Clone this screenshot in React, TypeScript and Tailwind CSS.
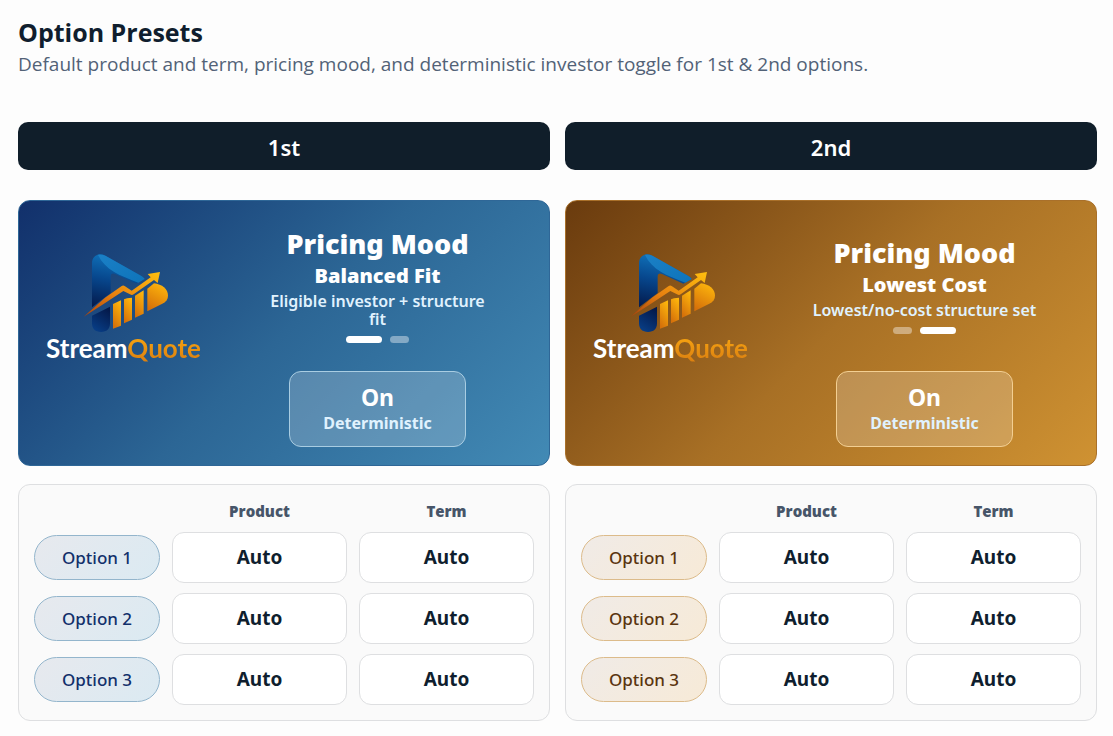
import { useId, useState } from 'react'
import clsx from 'clsx'

type Tone = 'blue' | 'amber'

interface Mood {
  name: string
  detail: string
}

const moods: Mood[] = [
  { name: 'Balanced Fit', detail: 'Eligible investor + structure fit' },
  { name: 'Lowest Cost', detail: 'Lowest/no-cost structure set' },
]

const products = ['Auto', 'Conventional', 'FHA', 'VA']
const terms = ['Auto', '30 yr', '20 yr', '15 yr']

const heroTones = {
  blue: 'border-[#2f6797] bg-linear-135 from-[#12306b] via-[#2c6695] to-[#428ab5]',
  amber: 'border-[#a9702a] bg-linear-135 from-[#6a3b0e] via-[#a87025] to-[#cf9232]',
}

const toggleTones = {
  blue: 'border-[#a9cde2]',
  amber: 'border-[#f3cf92]',
}

const pillTones = {
  blue: 'border-[#93b5cc] bg-linear-135 from-[#e7e9ee] to-[#dbeaf2] text-[#12306b]',
  amber: 'border-[#dcbb8a] bg-linear-135 from-[#f0ebe7] to-[#f7ead7] text-[#5a3510]',
}

function Logo() {
  const id = useId()
  const blue = `${id}-blue`
  const sky = `${id}-sky`
  const stem = `${id}-stem`
  const gold = `${id}-gold`
  const arrow = `${id}-arrow`

  return (
    <div className="flex flex-col items-center">
      <svg viewBox="-6 15 273 240" className="h-20 w-[91px]" aria-hidden="true">
        <defs>
          <linearGradient id={blue} x1="0.2" y1="0" x2="0" y2="1">
            <stop offset="0" stopColor="#0f70b8" />
            <stop offset="0.45" stopColor="#07468c" />
            <stop offset="1" stopColor="#04194a" />
          </linearGradient>
          <linearGradient id={sky} x1="0" y1="0" x2="1" y2="1">
            <stop offset="0" stopColor="#1b80c6" />
            <stop offset="1" stopColor="#0e74ba" />
          </linearGradient>
          <linearGradient id={stem} x1="0.7" y1="0" x2="0.2" y2="1">
            <stop offset="0" stopColor="#04194a" />
            <stop offset="1" stopColor="#083f88" />
          </linearGradient>
          <linearGradient id={gold} x1="0.7" y1="0" x2="0.3" y2="1">
            <stop offset="0" stopColor="#fdb50c" />
            <stop offset="1" stopColor="#d5700a" />
          </linearGradient>
          <linearGradient id={arrow} x1="0" y1="1" x2="1" y2="0">
            <stop offset="0" stopColor="#a8400c" />
            <stop offset="0.45" stopColor="#e88210" />
            <stop offset="1" stopColor="#ffc00e" />
          </linearGradient>
        </defs>
        <path
          d="M36 178V46C36 24 56 12 76 23L184 84c5 3 8 6 10 9l-25 14-64-29c-8-4-13 0-13 8v49z"
          fill={`url(#${blue})`}
        />
        <path d="M54 21c8-2 15-1 22 2l108 61c5 3 8 6 10 9l-19 11C118 82 76 66 54 21z" fill={`url(#${sky})`} />
        <path d="M36 203l54-27v50c0 17-10 26-27 26s-27-9-27-26z" fill={`url(#${stem})`} />
        <path d="M99 168l24-11v76l-24 9z" fill={`url(#${gold})`} />
        <path d="M132 154l9-3 15-2v66l-24 11z" fill={`url(#${gold})`} />
        <path d="M165 143l26-16v70l-26 12z" fill={`url(#${gold})`} />
        <path d="M202 122l20-16c24 3 42 17 42 37 0 11-6 18-17 24l-45 23z" fill={`url(#${gold})`} />
        <path
          d="M11 206l64-57 49-34c4-3 7-3 11 0l20 13 57-40-9-10 37-6-7 33-11-9-61 43c-3 3-7 3-11 0l-20-10-65 43z"
          fill={`url(#${arrow})`}
        />
      </svg>
      <div className="font-[Lato,sans-serif] text-[26px] leading-[30px] font-bold text-white">
        Stream
        <span className="bg-linear-to-b from-[#fdab10] to-[#d87c10] bg-clip-text text-transparent">Quote</span>
      </div>
    </div>
  )
}

function HeroCard({ tone, initialMood }: { tone: Tone; initialMood: number }) {
  const [mood, setMood] = useState(initialMood)
  const [deterministic, setDeterministic] = useState(true)

  return (
    <div className={clsx('grid grid-cols-[209px_1fr] rounded-xl border py-[18px] pr-[22px]', heroTones[tone])}>
      <div className="flex items-center justify-center pb-[50px]">
        <Logo />
      </div>
      <div className="flex flex-col items-center gap-5 text-white">
        <button
          type="button"
          onClick={() => setMood((mood + 1) % moods.length)}
          className="flex h-[132px] w-[232px] flex-col items-center justify-center"
        >
          <span className="text-[27px] leading-8 font-black">Pricing Mood</span>
          <span className="text-[20px] leading-8 font-black">{moods[mood].name}</span>
          <span className="text-[16px] leading-[18px] font-semibold text-[#e0f2fe]">{moods[mood].detail}</span>
          <span className="mt-2 flex gap-2">
            {moods.map((m, i) => (
              <span
                key={m.name}
                className={clsx('h-[7px] rounded-full', i === mood ? 'w-9 bg-white' : 'w-[19px] bg-white/40')}
              />
            ))}
          </span>
        </button>
        <button
          type="button"
          aria-pressed={deterministic}
          onClick={() => setDeterministic(!deterministic)}
          className={clsx(
            'flex h-[76px] w-[177px] flex-col items-center justify-center rounded-xl border bg-white/20',
            toggleTones[tone],
          )}
        >
          <span className="text-[23px] leading-7 font-bold">{deterministic ? 'On' : 'Off'}</span>
          <span className="text-[16px] leading-6 font-bold text-[#e0f2fe]">Deterministic</span>
        </button>
      </div>
    </div>
  )
}

function CycleButton({ values, labelledBy }: { values: string[]; labelledBy: string }) {
  const [index, setIndex] = useState(0)
  const id = useId()

  return (
    <button
      id={id}
      type="button"
      aria-labelledby={`${labelledBy} ${id}`}
      onClick={() => setIndex((index + 1) % values.length)}
      className="h-[51px] rounded-xl border border-[#dedfe1] bg-white text-[19px] font-bold text-[#0f1e2e]"
    >
      {values[index]}
    </button>
  )
}

function OptionRow({ label, tone, ids }: { label: string; tone: Tone; ids: { product: string; term: string } }) {
  const id = useId()

  return (
    <>
      <span
        id={id}
        className={clsx('flex h-[45px] items-center justify-center rounded-full border text-[17px] font-medium', pillTones[tone])}
      >
        {label}
      </span>
      <CycleButton values={products} labelledBy={`${id} ${ids.product}`} />
      <CycleButton values={terms} labelledBy={`${id} ${ids.term}`} />
    </>
  )
}

function OptionGrid({ tone }: { tone: Tone }) {
  const id = useId()
  const ids = { product: `${id}-product`, term: `${id}-term` }
  const heading = "text-center font-['Open_Sans',sans-serif] text-[15px] leading-[22px] font-extrabold text-[#475569]"

  return (
    <div className="grid grid-cols-[126px_1fr_1fr] items-center gap-x-3 gap-y-2.5 rounded-xl border border-[#dedfe1] bg-[#fafafa] p-[15px]">
      <span />
      <span id={ids.product} className={heading}>
        Product
      </span>
      <span id={ids.term} className={heading}>
        Term
      </span>
      {['Option 1', 'Option 2', 'Option 3'].map((label) => (
        <OptionRow key={label} label={label} tone={tone} ids={ids} />
      ))}
    </div>
  )
}

function PresetColumn({ title, tone, initialMood }: { title: string; tone: Tone; initialMood: number }) {
  return (
    <section className="flex flex-col">
      <h2 className="flex h-12 items-center justify-center rounded-[10px] bg-[#101e2a] pt-0.5 text-[22px] font-semibold text-white">
        {title}
      </h2>
      <div className="mt-[30px] flex flex-col gap-[18px]">
        <HeroCard tone={tone} initialMood={initialMood} />
        <OptionGrid tone={tone} />
      </div>
    </section>
  )
}

export default function App() {
  return (
    <main className="min-h-screen bg-[#fdfdfd] pt-4 pr-4 pb-4 pl-[18px] font-['Noto_Sans','Open_Sans',sans-serif]">
      <header className="font-['Open_Sans',sans-serif]">
        <h1 className="text-[25px] leading-8 font-bold text-[#101e2e]">Option Presets</h1>
        <p className="text-[19px] leading-8 font-medium text-[#526277]">
          Default product and term, pricing mood, and deterministic investor toggle for 1st &amp; 2nd options.
        </p>
      </header>
      <div className="mt-[42px] grid grid-cols-2 gap-[15px]">
        <PresetColumn title="1st" tone="blue" initialMood={0} />
        <PresetColumn title="2nd" tone="amber" initialMood={1} />
      </div>
    </main>
  )
}
